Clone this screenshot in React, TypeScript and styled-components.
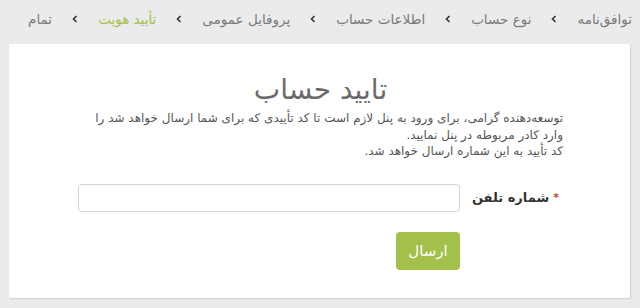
import React from "react";
import styled, { createGlobalStyle } from "styled-components";

const Global = createGlobalStyle`
  html, body { margin: 0; padding: 0; background: #ebebeb; }
  body { font-family: "DejaVu Sans", "Noto Sans", sans-serif; direction: rtl; }
  * { box-sizing: border-box; }
`;

const Page = styled.div`
  width: 640px;
  height: 308px;
  background: #ebebeb;
  display: flex;
  flex-direction: column;
  direction: rtl;
`;

const Breadcrumb = styled.nav`
  flex: none;
  height: 44px;
  display: flex;
  align-items: center;
  padding: 0 8px 6px 6px;
  white-space: nowrap;
`;

const Crumb = styled.span<{ $active?: boolean }>`
  font-size: 13.5px;
  color: ${(p) => (p.$active ? "#a3c14a" : "#7a7a7a")};
`;

const Sep = styled.span`
  margin: 0 20px;
  display: inline-flex;
  align-items: center;
`;

const Card = styled.section`
  margin: 0 10px 10px 9px;
  flex: 1;
  min-height: 0;
  background: #fff;
  box-shadow: 1px 1px 2px rgba(0, 0, 0, 0.12);
  border-radius: 2px;
  padding: 28px 67px 26px 69px;
  display: flex;
  flex-direction: column;
`;

const Title = styled.h1`
  margin: 0 0 2px 0;
  text-align: center;
  font-size: 28px;
  font-weight: normal;
  color: #6a6a6a;
  line-height: 36px;
`;

const Text = styled.p`
  margin: 0;
  font-size: 12px;
  line-height: 16.5px;
  color: #555;
  text-align: right;
  white-space: nowrap;
`;

const FormRow = styled.div`
  margin-top: 24px;
  display: flex;
  align-items: center;
`;

const Label = styled.label`
  width: 103px;
  flex: none;
  display: flex;
  align-items: center;
  gap: 4px;
  padding-right: 4px;
  font-size: 13px;
  font-weight: bold;
  color: #333;
`;

const Star = styled.span`
  color: #b94a48;
  font-size: 11px;
`;

const Input = styled.input`
  width: 382px;
  height: 28px;
  border: 1px solid #d4d4d4;
  border-radius: 4px;
  outline: none;
  background: #fff;
`;

const Actions = styled.div`
  margin-top: 20px;
  padding-right: 103px;
  display: flex;
`;

const Button = styled.button`
  width: 64px;
  height: 38px;
  border: none;
  border-radius: 4px;
  background: #a3c14a;
  color: #fff;
  font-family: "DejaVu Sans", sans-serif;
  font-size: 15px;
  cursor: pointer;
`;

const steps = ["توافق‌نامه", "نوع حساب", "اطلاعات حساب", "پروفایل عمومی", "تأیید هویت", "تمام"];

const Chevron = () => (
  <svg width="6" height="8" viewBox="0 0 6 8">
    <path d="M4.5 1 L1.5 4 L4.5 7" fill="none" stroke="#333" strokeWidth="1.6" />
  </svg>
);

export default function App() {
  return (
    <>
      <Global />
      <Page>
        <Breadcrumb>
          {steps.map((s, i) => (
            <React.Fragment key={s}>
              <Crumb $active={i === 4}>{s}</Crumb>
              {i < steps.length - 1 && (
                <Sep>
                  <Chevron />
                </Sep>
              )}
            </React.Fragment>
          ))}
        </Breadcrumb>
        <Card>
          <Title>تایید حساب</Title>
          <Text>
            توسعه‌دهنده گرامی، برای ورود به پنل لازم است تا کد تأییدی که برای شما ارسال خواهد شد را
            <br />
            وارد کادر مربوطه در پنل نمایید.
            <br />
            کد تأیید به این شماره ارسال خواهد شد.
          </Text>
          <FormRow>
            <Label>
              <Star>*</Star>
              شماره تلفن
            </Label>
            <Input type="text" />
          </FormRow>
          <Actions>
            <Button>ارسال</Button>
          </Actions>
        </Card>
      </Page>
    </>
  );
}
